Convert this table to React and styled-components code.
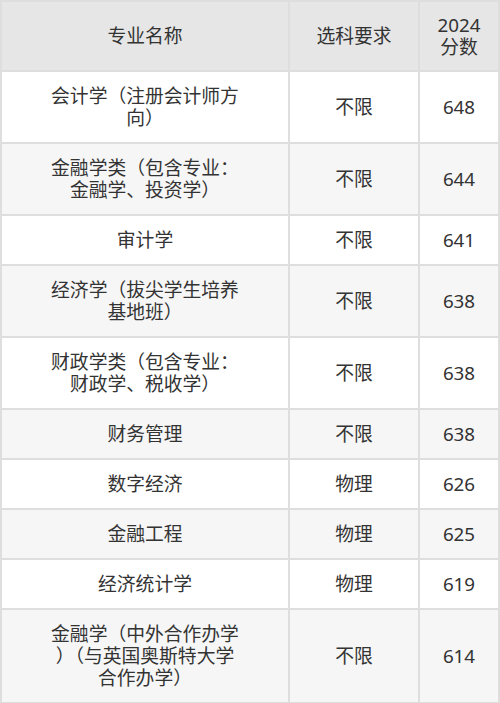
import React from "react";
import styled, { createGlobalStyle } from "styled-components";

const Global = createGlobalStyle`
  html, body { margin: 0; padding: 0; background: #ffffff; }
  body { font-family: "Noto Sans", "Noto Sans CJK SC", sans-serif; }
`;

const Table = styled.div`
  width: 500px;
  box-sizing: border-box;
  border-left: 2px solid #dedede;
  border-top: 2px solid #dedede;
  display: flex;
  flex-direction: column;
  color: #333333;
  font-family: "Noto Sans", "Noto Sans CJK SC", sans-serif;
  font-size: 18.8px;
  line-height: 22px;
`;

const Row = styled.div`
  display: grid;
  grid-template-columns: 288px 130px 80px;
  background: ${(p) => (p.$head ? "#e6e6e6" : p.$alt ? "#f6f6f6" : "#ffffff")};
`;

const Cell = styled.div`
  box-sizing: border-box;
  border-right: 2px solid #dedede;
  border-bottom: 2px solid #dedede;
  padding: ${(p) => (p.$head ? "12px 4px" : "13px 4px")};
  display: flex;
  align-items: center;
  justify-content: center;
  text-align: center;
  white-space: nowrap;
`;

const rows = [
  [["会计学（注册会计师方", "向）"], "不限", "648"],
  [["金融学类（包含专业：", "金融学、投资学）"], "不限", "644"],
  [["审计学"], "不限", "641"],
  [["经济学（拔尖学生培养", "基地班）"], "不限", "638"],
  [["财政学类（包含专业：", "财政学、税收学）"], "不限", "638"],
  [["财务管理"], "不限", "638"],
  [["数字经济"], "物理", "626"],
  [["金融工程"], "物理", "625"],
  [["经济统计学"], "物理", "619"],
  [["金融学（中外合作办学", "）（与英国奥斯特大学", "合作办学）"], "不限", "614"],
];

const Lines = ({ lines }) =>
  lines.map((l, i) => (
    <React.Fragment key={i}>
      {i > 0 && <br />}
      {l}
    </React.Fragment>
  ));

export default function App() {
  return (
    <>
      <Global />
      <Table>
        <Row $head>
          <Cell $head>专业名称</Cell>
          <Cell $head>选科要求</Cell>
          <Cell $head>
            2024
            <br />
            分数
          </Cell>
        </Row>
        {rows.map((r, i) => (
          <Row key={i} $alt={i % 2 === 1}>
            <Cell>
              <span>
                <Lines lines={r[0]} />
              </span>
            </Cell>
            <Cell>{r[1]}</Cell>
            <Cell>{r[2]}</Cell>
          </Row>
        ))}
      </Table>
    </>
  );
}
